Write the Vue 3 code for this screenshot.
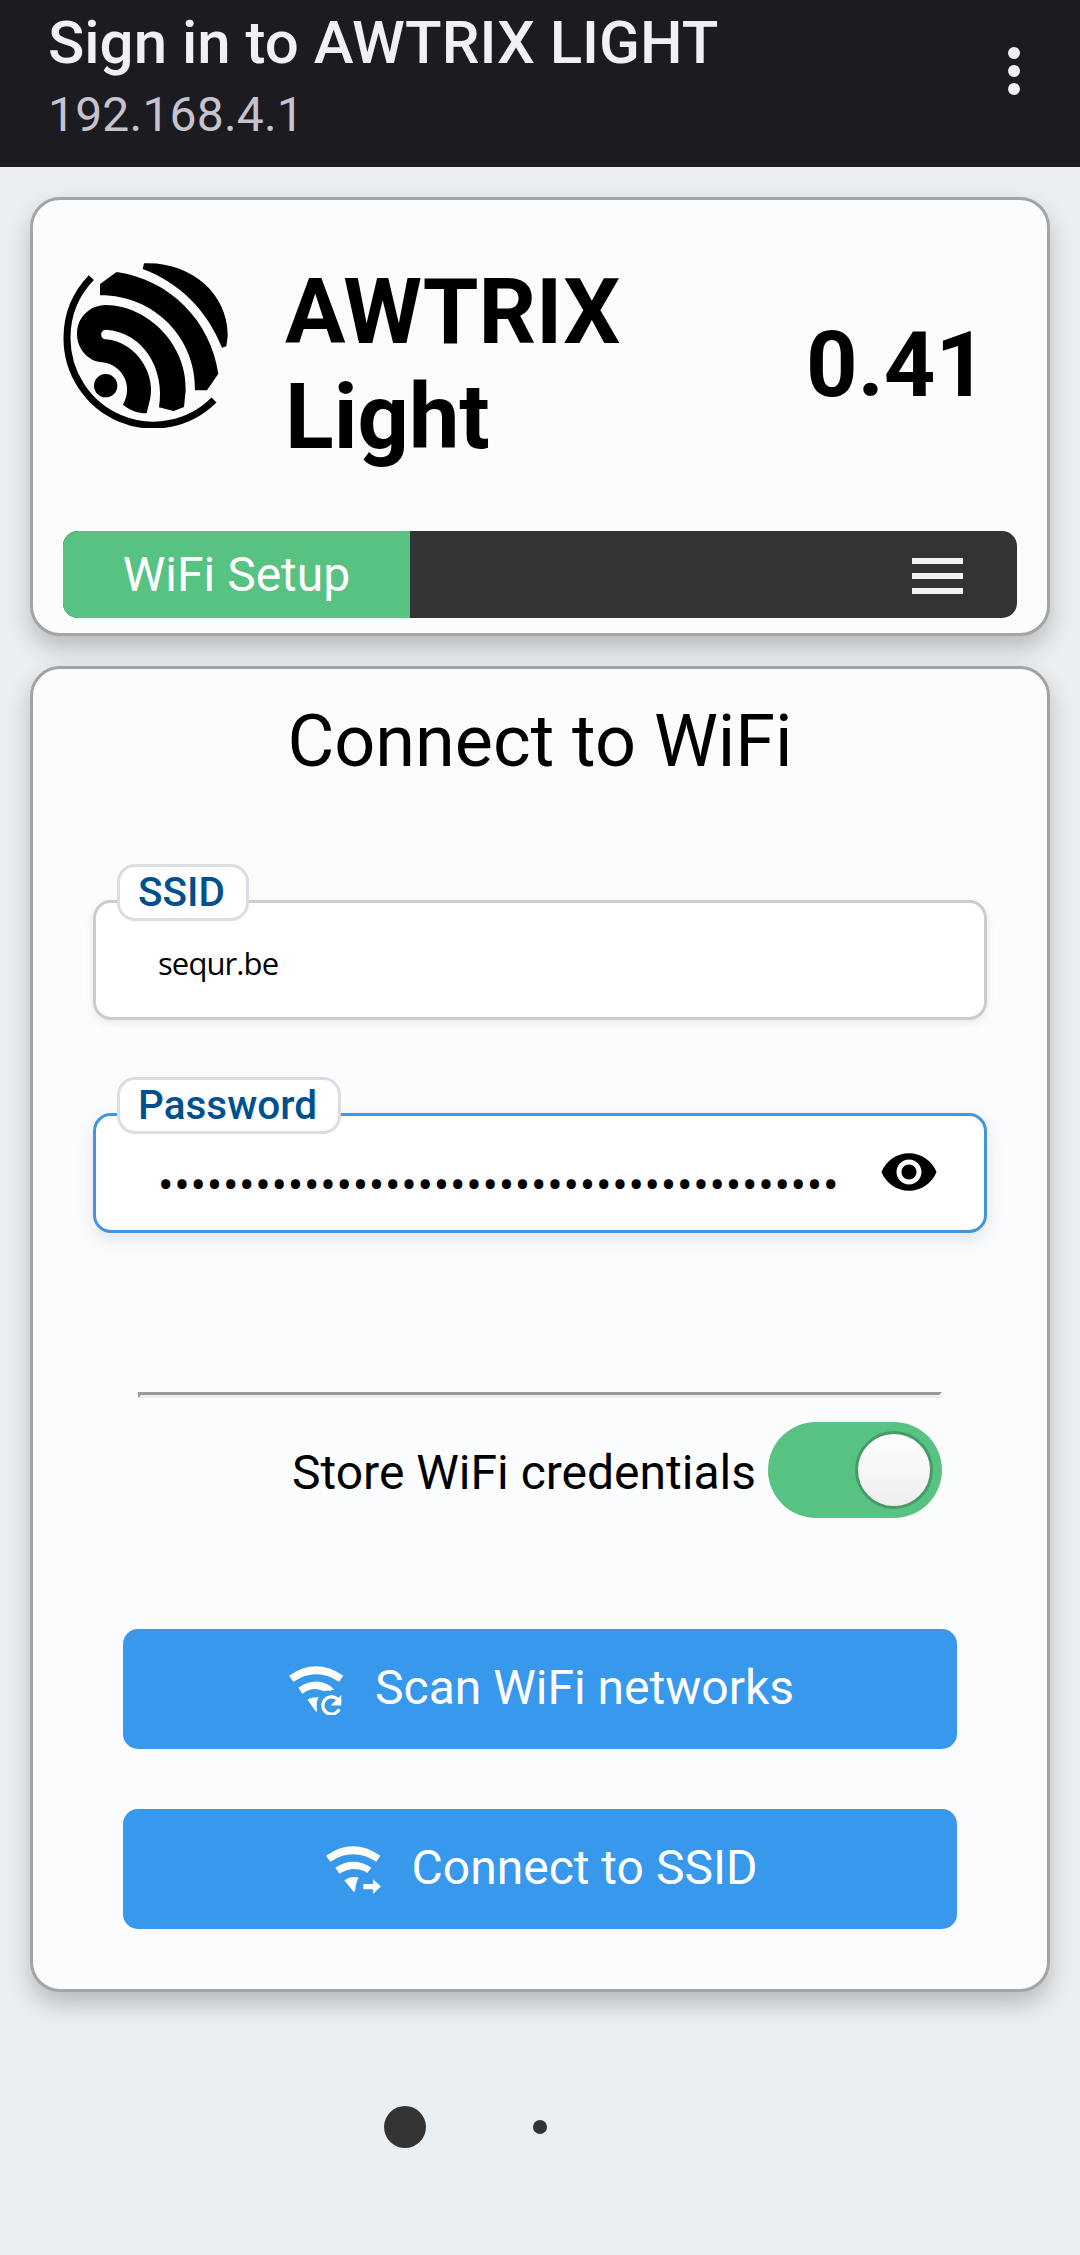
<script setup>
import { ref } from 'vue'

const ssid = ref('sequr.be')
const mask = '•'.repeat(42)
</script>

<template>
  <div class="page">
    <header class="appbar">
      <div class="appbar-text">
        <div class="appbar-title">Sign in to AWTRIX LIGHT</div>
        <div class="appbar-sub">192.168.4.1</div>
      </div>
      <div class="kebab"><i></i><i></i><i></i></div>
    </header>

    <section class="card head-card">
      <div class="brand">
        <svg class="logo" viewBox="69 68 495 495">
          <path d="M154 112A260 260 0 0 0 81 291A259 261 0 0 0 522 479" fill="none" stroke="#000" stroke-width="21" />
          <circle cx="197" cy="436" r="35" />
          <path d="M312 69C450 62 566 160 563 288L559 318L546 322C502 212 420 127 308 86Z" />
          <path d="M180 131L230 95C390 118 512 242 535 400L501 450H465C468 292 342 164 180 165Z" />
          <path d="M197 194C329 196 442 318 437 450L432 500L401 512L357 501C376 386 310 275 197 268C179 269 179 296 197 297C291 304 356 409 326 493L320 519C294 519 270 510 249 493C281 438 248 374 188 366C143 364 111 324 111 281C111 232 148 195 197 194Z" />
        </svg>
        <h1 class="name">AWTRIX<br />Light</h1>
        <h1 class="version">0.41</h1>
      </div>
      <nav class="nav">
        <a class="nav-active">WiFi Setup</a>
        <div class="burger"><i></i><i></i><i></i></div>
      </nav>
    </section>

    <section class="card form-card">
      <h2 class="heading">Connect to WiFi</h2>

      <div class="field">
        <label class="tag">SSID</label>
        <span class="value">{{ ssid }}</span>
      </div>

      <div class="field focused">
        <label class="tag">Password</label>
        <span class="dots">{{ mask }}</span>
        <svg class="eye" viewBox="0 0 24 24">
          <path d="M12 4.5C7 4.5 2.73 7.61 1 12c1.73 4.39 6 7.5 11 7.5s9.27-3.11 11-7.5c-1.73-4.39-6-7.5-11-7.5zM12 17c-2.76 0-5-2.24-5-5s2.24-5 5-5 5 2.24 5 5-2.24 5-5 5zm0-8c-1.66 0-3 1.34-3 3s1.34 3 3 3 3-1.34 3-3-1.34-3-3-3z" />
        </svg>
      </div>

      <hr class="rule" />

      <div class="store">
        <span>Store WiFi credentials</span>
        <div class="switch"><div class="thumb"></div></div>
      </div>

      <button class="btn">
        <svg class="btn-icon" viewBox="56 77 165 149" fill="#fff">
          <path d="M56 106Q137 50 219 106L206 124Q137 79 69 124Z" />
          <path d="M84 142Q135 107 181 138L192 148L178 151Q168 150 160 153Q128 136 96 160Z" />
          <path d="M111 178Q125 169 145 171Q135 187 141 214L136 213Z" />
          <path d="M207 207A26 26 0 1 1 201 176" fill="none" stroke="#fff" stroke-width="10" />
          <path d="M213 164V196H181Z" />
        </svg>
        <span>Scan WiFi networks</span>
      </button>

      <button class="btn">
        <svg class="btn-icon" viewBox="74 77 165 149" fill="#fff">
          <path d="M74 106Q155 50 237 106L225 124Q155 79 87 124Z" />
          <path d="M102 142Q156 106 210 142L198 158L190 153Q152 136 114 160Z" />
          <path d="M129 180Q149 165 172 172Q163 188 161 214H156Z" />
          <path d="M186 191H215V177L239 199L215 221V207H186Z" />
        </svg>
        <span>Connect to SSID</span>
      </button>
    </section>

    <div class="loader"><i class="big"></i><i class="small"></i></div>
  </div>
</template>

<style>
body {
  margin: 0;
  background: #ebeff2;
}
</style>

<style scoped>
.page {
  width: 1080px;
  height: 2255px;
  overflow: hidden;
  background: #ebeff2;
  color: #000;
  font-family: Roboto, sans-serif;
  font-size: 48px;
}
.page * {
  box-sizing: border-box;
}
.appbar {
  display: flex;
  justify-content: space-between;
  height: 167px;
  padding: 8px 60px 0 48px;
  background: #1c1b1f;
}
.appbar-title {
  font-size: 60px;
  line-height: 70px;
  font-weight: 500;
  color: #f3eff7;
}
.appbar-sub {
  line-height: 56px;
  margin-top: 9px;
  letter-spacing: 0.2px;
  color: #c6c2cf;
}
.kebab {
  display: flex;
  flex-direction: column;
  gap: 6px;
  padding-top: 39px;
}
.kebab i {
  width: 12px;
  height: 12px;
  border-radius: 50%;
  background: #f3eff7;
}
.card {
  margin: 0 30px;
  border: 3px solid #a4a4a4;
  border-radius: 30px;
  background: #fbfcfe;
  box-shadow: 0 12px 24px rgba(0, 0, 0, 0.22);
}
.head-card {
  margin-top: 30px;
  height: 439px;
  padding: 63px 30px 0;
}
.brand {
  display: flex;
  height: 268px;
}
.logo {
  width: 165px;
  height: 165px;
  flex: none;
}
.name,
.version {
  margin: 0;
  font-size: 90px;
  line-height: 105px;
  font-weight: 700;
}
.name {
  margin: -3px 0 0 57px;
  width: 521px;
}
.version {
  margin-top: 50px;
}
.nav {
  display: flex;
  justify-content: space-between;
  align-items: center;
  height: 87px;
  border-radius: 15px;
  overflow: hidden;
  background: #333;
}
.nav-active {
  width: 347px;
  line-height: 87px;
  text-align: center;
  color: #fff;
  background: #57c282;
}
.burger {
  display: flex;
  flex-direction: column;
  gap: 9px;
  margin: 3px 54px 0 0;
}
.burger i {
  width: 51px;
  height: 6px;
  background: #f2f2f2;
}
.form-card {
  margin-top: 30px;
  height: 1326px;
  padding: 31px 60px 0;
}
.heading {
  margin: 0 0 116px;
  font-size: 72px;
  line-height: 84px;
  font-weight: 400;
  text-align: center;
}
.field {
  position: relative;
  display: flex;
  align-items: center;
  height: 120px;
  padding: 0 45px 0 62px;
  border: 3px solid #ccc;
  border-radius: 18px;
  background: #fff;
  box-shadow: 0 3px 9px rgba(0, 0, 40, 0.08);
}
.field + .field {
  margin-top: 93px;
}
.focused {
  border-color: #4496dc;
  box-shadow: 0 6px 18px rgba(0, 0, 60, 0.1);
}
.tag {
  position: absolute;
  left: 21px;
  top: -39px;
  height: 57px;
  padding: 0 21px 0 18px;
  border: 3px solid #dcdce4;
  border-radius: 18px;
  background: #fff;
  color: #00508f;
  font-size: 40.5px;
  line-height: 51px;
  font-weight: 500;
}
.value {
  margin-top: 5px;
  font-family: "Open Sans", sans-serif;
  font-size: 31px;
  letter-spacing: -0.9px;
}
.dots {
  margin-top: 24px;
  font-size: 46px;
  line-height: 54px;
  letter-spacing: 0.7px;
  white-space: nowrap;
}
.eye {
  width: 60px;
  height: 60px;
  margin-left: auto;
  margin-bottom: 2px;
  flex: none;
}
.rule {
  height: 6px;
  margin: 159px 45px 24px;
  border: 3px solid;
  border-color: #9a9a9a #eee #eee #9a9a9a;
}
.store {
  display: flex;
  justify-content: flex-end;
  align-items: center;
  gap: 12px;
  height: 96px;
  margin-right: 45px;
  margin-bottom: 111px;
}
.store span {
  margin-top: 4px;
}
.switch {
  width: 174px;
  height: 96px;
  padding: 9px;
  border-radius: 48px;
  background: #57c282;
}
.thumb {
  width: 78px;
  height: 78px;
  margin-left: auto;
  border: 3px solid #469b68;
  border-radius: 50%;
  background: linear-gradient(#fff, #eee);
}
.btn {
  display: flex;
  justify-content: center;
  align-items: center;
  width: 834px;
  height: 120px;
  margin: 0 auto 60px;
  padding: 0 0 0 3px;
  border: 0;
  border-radius: 15px;
  background: #3898ec;
  color: #fff;
  font: inherit;
}
.btn span {
  margin-bottom: 3px;
}
.btn-icon {
  width: 55px;
  height: 49.6px;
  margin: 3px 31px 0 0;
}
.loader {
  display: flex;
  align-items: center;
  gap: 107px;
  height: 42px;
  margin: 114px 0 0 384px;
}
.loader i {
  border-radius: 50%;
  background: #333;
}
.big {
  width: 42px;
  height: 42px;
}
.small {
  width: 14px;
  height: 14px;
}
</style>
